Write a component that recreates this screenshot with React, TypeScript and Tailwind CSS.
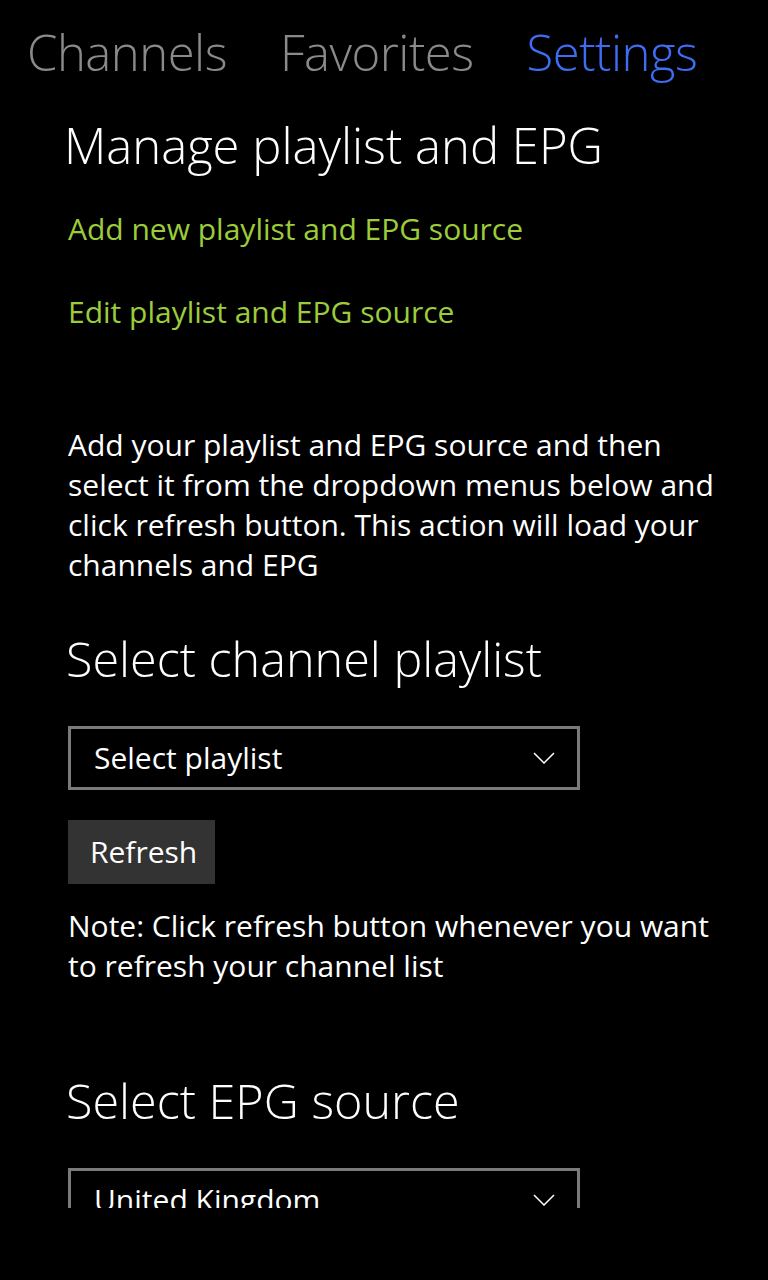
import React from "react"

const Chevron = () => (
    <svg width="22" height="12" viewBox="0 0 22 12" className="shrink-0">
        <polyline points="1,1 11,11 21,1" fill="none" stroke="#ffffff" strokeWidth="1.5" />
    </svg>
)

const Dropdown = ({ label }: { label: string }) => {
    return (
        <div className="flex items-center justify-between w-[512px] h-[64px] border-[3px] border-[#7a7a7a] pl-[23px] pr-[22px]">
            <span className="text-[30px] text-white leading-[40px]">{label}</span>
            <Chevron />
        </div>
    )
}

const App = () => {
    return (
        <div className="w-[768px] h-[1280px] bg-black overflow-hidden" style={{ fontFamily: '"Open Sans", "Noto Sans", sans-serif' }}>
            <div className="h-[1208px] overflow-hidden">
                <div className="flex items-center pl-[27px] pt-[22px] gap-[53px] text-[49px] font-light leading-[60px] tracking-[-0.5px]">
                    <span className="text-[#8a8a8a]">Channels</span>
                    <span className="text-[#8a8a8a]">Favorites</span>
                    <span className="text-[#3e6df4]">Settings</span>
                </div>

                <div className="pl-[68px]">
                    <h1 className="-ml-[4px] mt-[33px] text-[49px] font-light text-white leading-[60px]">Manage playlist and EPG</h1>

                    <div className="mt-[34px] text-[30px] text-[#9ccc3a] leading-[40px]">Add new playlist and EPG source</div>
                    <div className="mt-[43px] text-[30px] text-[#9ccc3a] leading-[40px]">Edit playlist and EPG source</div>

                    <p className="mt-[93px] w-[665px] text-[30px] text-white leading-[40px]">
                        Add your playlist and EPG source and then select it from the dropdown menus below and click refresh button. This action will load your channels and EPG
                    </p>

                    <h2 className="-ml-[2px] mt-[43px] text-[48.5px] font-light text-white leading-[60px]">Select channel playlist</h2>

                    <div className="mt-[38px]">
                        <Dropdown label="Select playlist" />
                    </div>

                    <button className="mt-[30px] h-[64px] w-[147px] bg-[#333333] text-white text-[30px] leading-[40px] flex items-center pl-[22px]">Refresh</button>

                    <p className="mt-[22px] w-[665px] text-[30px] text-white leading-[40px]">
                        Note: Click refresh button whenever you want to refresh your channel list
                    </p>

                    <h2 className="-ml-[2px] mt-[84px] text-[48.5px] font-light text-white leading-[60px]">Select EPG source</h2>

                    <div className="mt-[38px]">
                        <Dropdown label="United Kingdom" />
                    </div>
                </div>
            </div>
        </div>
    )
}

export default App
